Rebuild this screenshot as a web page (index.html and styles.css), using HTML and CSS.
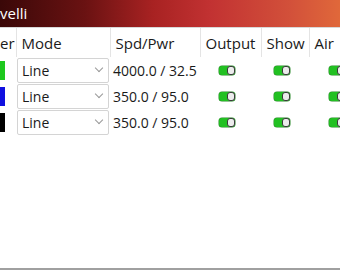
FILE: index.html
```html
<!DOCTYPE html>
<html lang="en">
<head>
  <meta charset="UTF-8" />
  <title>Layers</title>
  <link rel="stylesheet" href="styles.css">
</head>
<body>
  <div class="window">
    <div class="titlebar">velli</div>

    <table class="layers">
      <colgroup>
        <col class="c-color">
        <col class="c-mode">
        <col class="c-spd">
        <col class="c-out">
        <col class="c-show">
        <col class="c-air">
      </colgroup>
      <thead>
        <tr>
          <th class="first">er</th>
          <th>Mode</th>
          <th>Spd/Pwr</th>
          <th>Output</th>
          <th>Show</th>
          <th>Air</th>
        </tr>
      </thead>
      <tbody>
        <tr>
          <td class="first"><span class="swatch green"></span></td>
          <td><div class="select">Line<span class="chev"></span></div></td>
          <td class="num">4000.0 / 32.5</td>
          <td class="tog out"><span class="toggle"><i></i></span></td>
          <td class="tog show"><span class="toggle"><i></i></span></td>
          <td class="tog air"><span class="toggle"><i></i></span></td>
        </tr>
        <tr>
          <td class="first"><span class="swatch blue"></span></td>
          <td><div class="select">Line<span class="chev"></span></div></td>
          <td class="num">350.0 / 95.0</td>
          <td class="tog out"><span class="toggle"><i></i></span></td>
          <td class="tog show"><span class="toggle"><i></i></span></td>
          <td class="tog air"><span class="toggle"><i></i></span></td>
        </tr>
        <tr>
          <td class="first"><span class="swatch black"></span></td>
          <td><div class="select">Line<span class="chev"></span></div></td>
          <td class="num">350.0 / 95.0</td>
          <td class="tog out"><span class="toggle"><i></i></span></td>
          <td class="tog show"><span class="toggle"><i></i></span></td>
          <td class="tog air"><span class="toggle"><i></i></span></td>
        </tr>
      </tbody>
    </table>
  </div>
</body>
</html>
```

FILE: styles.css
```css
body {
  margin: 0;
  font-family: "Open Sans", "Noto Sans", sans-serif;
  background: #fff;
  color: #1a1a1a;
  overflow: hidden;
}

.window {
  width: 340px;
  height: 270px;
  border-bottom: 2px solid #a0a0a0;
  box-sizing: border-box;
  overflow: hidden;
}

.titlebar {
  height: 27px;
  line-height: 26px;
  font-size: 15px;
  color: #fff;
  background: linear-gradient(to right, #3a0808 0%, #6a1212 25%, #a82222 45%, #c23232 62%, #d2503a 85%, #e0683a 100%);
  border-bottom: 1px solid #d8d8d8;
}

.layers {
  border-collapse: collapse;
  table-layout: fixed;
  width: 360px;
  font-size: 14px;
}

.c-color { width: 16px; }
.c-mode { width: 94px; }
.c-spd { width: 90px; }
.c-out { width: 61px; }
.c-show { width: 48px; }
.c-air { width: 51px; }

.layers th {
  font-weight: normal;
  font-size: 15px;
  text-align: left;
  height: 29px;
  padding: 0 5px;
  border-right: 1px solid #e4e4e4;
  white-space: nowrap;
  overflow: hidden;
}

.layers th.first {
  padding: 0;
}

.layers td {
  height: 26px;
  padding: 0;
  white-space: nowrap;
}

.swatch {
  display: block;
  width: 5px;
  height: 19px;
}

.green { background: #1ec81e; }
.blue { background: #1010e0; }
.black { background: #000; }

.select {
  display: flex;
  align-items: center;
  justify-content: space-between;
  height: 25px;
  margin-left: 1px;
  padding: 0 6px 0 4px;
  border: 1px solid #d4d4d4;
  border-radius: 2px;
  box-sizing: border-box;
  width: 92px;
}

.chev {
  width: 5px;
  height: 5px;
  border-right: 1px solid #999;
  border-bottom: 1px solid #999;
  transform: translateY(-2px) rotate(45deg);
}

.layers td.num {
  padding-left: 3px;
}

.layers td.out { padding-left: 19px; }
.layers td.show { padding-left: 13px; }
.layers td.air { padding-left: 20px; }

.toggle {
  display: flex;
  width: 16px;
  height: 9px;
  border-radius: 3px;
  background: #22c022;
  justify-content: flex-end;
  box-shadow: 0 0 0 0.5px #2a8a2a;
}

.toggle i {
  display: block;
  width: 8px;
  height: 9px;
  box-sizing: border-box;
  border: 1px solid #3a3a3a;
  border-radius: 3px;
  background: #ececec;
}
```
